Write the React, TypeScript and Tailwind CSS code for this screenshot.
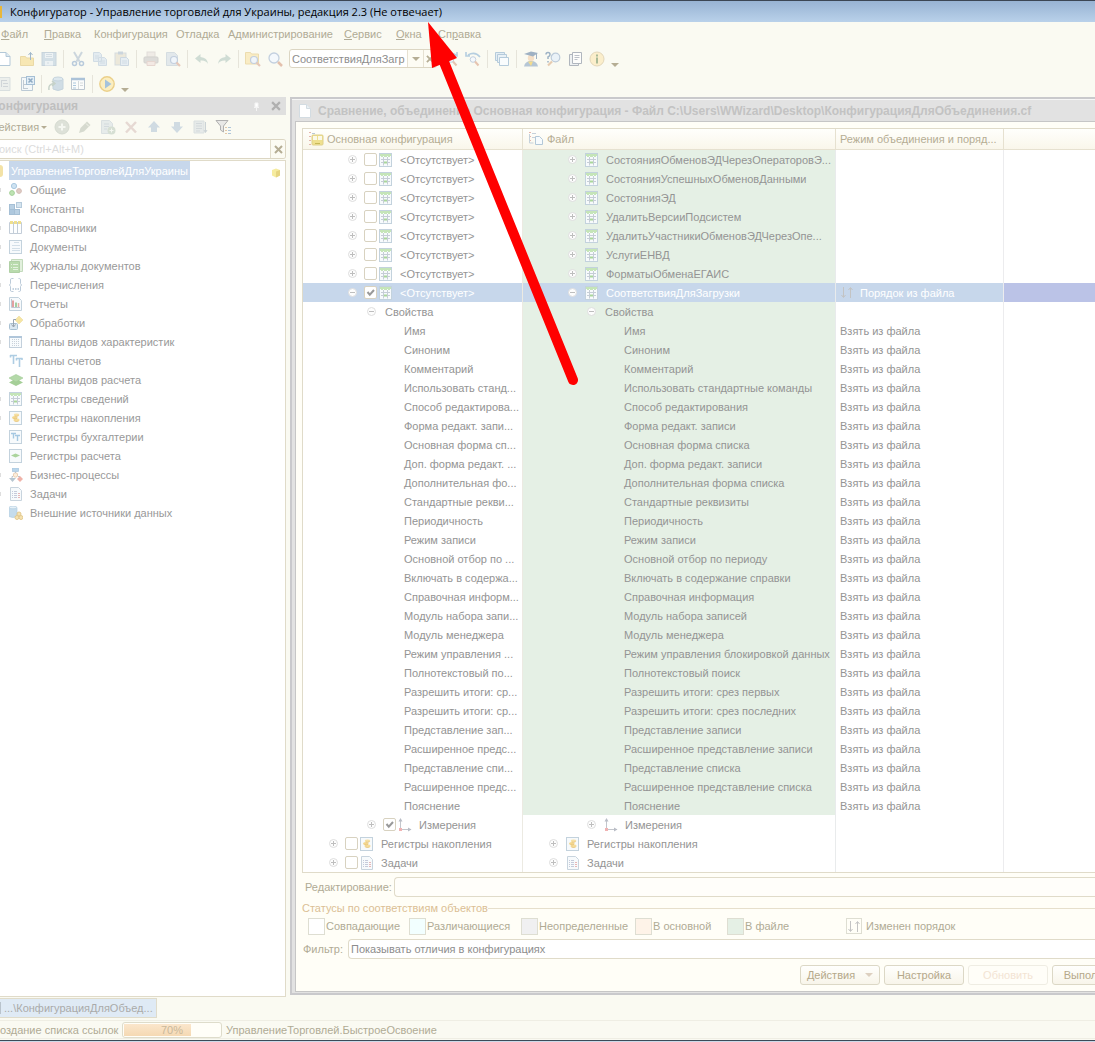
import React from 'react';

interface TreeRow {
  level: number;
  left: string;
  right: string;
  mode?: string;
  toggle?: 'plus' | 'minus';
  icon?: IconName;
  check?: 'on' | 'off';
  green?: boolean;
  selected?: boolean;
}

const P = ({ children, size = 16 }: { children: React.ReactNode; size?: number }) => (
  <svg width={size} height={size} viewBox={`0 0 ${size} ${size}`} fill="none" className="shrink-0" aria-hidden="true">
    {children}
  </svg>
);

const frame = <rect x=".5" y=".5" width="12" height="13" fill="#f7fafc" stroke="#c3d2dd" />;

const ICONS = {
  common: (
    <>
      <circle cx="5" cy="3" r="2.600" fill="#cfe3f2" stroke="#a9c8e0" />
      <circle cx="3" cy="10" r="2.400" fill="#bfe3b4" stroke="#a5d199" />
      <circle cx="10" cy="8" r="2.400" fill="#e0ccc6" stroke="#d3bcb5" />
    </>
  ),
  constants: (
    <>
      <rect x="7.500" y=".5" width="5" height="5" fill="#d5e4ef" stroke="#b5cadb" />
      <rect x=".5" y="2.500" width="5" height="5" fill="#b9d0e3" stroke="#a5bfd5" />
      <rect x=".5" y="7.500" width="5" height="5" fill="#aec8de" stroke="#a5bfd5" />
      <rect x="5.500" y="7.500" width="5" height="5" fill="#b9d0e3" stroke="#a5bfd5" />
    </>
  ),
  catalog: (
    <>
      <path d="M.5 1.500h12v11H.5zM4.500 2v10.500M8.500 2v10.500" fill="#fdfeff" stroke="#c3cdd8" />
      <path d="M1 1.500h3M5 1.500h3M9 1.500h3" stroke="#efdf8f" strokeWidth="3" />
    </>
  ),
  document: (
    <>
      {frame}
      <path d="M5 2.500h5M3 5.500h8M3 8.500h8M3 10.500h8" stroke="#d3dfe8" />
    </>
  ),
  journal: (
    <>
      <path d="M2.500.5h11v12h-11z" fill="#e2f0dd" stroke="#c3dabc" />
      <path d="M.5 2.500h10v11H.5z" fill="#b9dbad" stroke="#b0d0a5" />
      <path d="M4 5.500h5M4 8.500h5M4 10.500h5M2 5.500h1M2 8.500h1" stroke="#e4f2df" />
    </>
  ),
  enumeration: (
    <>
      <path d="M4.500.5h-2q-1 0-1 1.500v3.500L.5 7l1 1.500V12q0 1.500 1 1.500h2M9.500.5h1q1 0 1 1.500v3.500l1 1.500-1 1.500V12q0 1.500-1 1.500h-1" stroke="#bccbd9" />
      <path d="M3.500 11h1.500M6 11h1.500M8.500 11H10" stroke="#b4c6d6" strokeWidth="1.500" />
    </>
  ),
  report: (
    <>
      <path d="M.5.5h9l3 3v10H.5z" fill="#f7fafc" stroke="#c3d2dd" />
      <path d="M4 10V3.500" stroke="#e3a0a0" strokeWidth="2" />
      <path d="M7 10V5.500" stroke="#a3cfa3" strokeWidth="2" />
      <path d="M9.500 10V6" stroke="#e8b0a5" strokeWidth="1.500" />
      <path d="M2.500 2v8.500H11" stroke="#c0c9d3" />
    </>
  ),
  processing: (
    <>
      <path d="M10 0l4 4-4 4-4-4z" fill="#f6e5a3" stroke="#ecdca0" strokeWidth=".6" />
      <rect x=".5" y="7.500" width="8" height="6" rx="1" fill="#dbe8f1" stroke="#a8c0d2" />
      <path d="M7 3.500H4.500V11M2.500 8.500l2 2.500 2-2.500" stroke="#9aa5b0" />
    </>
  ),
  charPlan: (
    <>
      <rect x=".5" y="1.500" width="12" height="11" fill="#f8fbfd" stroke="#c3d0dc" />
      <path d="M0 2h13" stroke="#b0c6da" strokeWidth="2" />
      <path d="M3.500 4v8M5.500 4v8M7.500 4v8M9.500 4v8" stroke="#c9d1da" strokeDasharray="1 1" />
    </>
  ),
  accounts: (
    <path d="M1 1.500h7M4.500 2v8M7 4.500h6.500M10.500 5v8M1.500 1v2.500M7.500 4v2.500M13 4v2" stroke="#aecde3" strokeWidth="1.600" />
  ),
  calcPlan: (
    <>
      <path d="M0 9.500l7-4 7 4-7 3.500z" fill="#a5cf98" />
      <path d="M0 5L7 1.500 14 5 7 9z" fill="#b4d9a9" stroke="#a0cb93" strokeWidth=".6" />
    </>
  ),
  infoReg: (
    <>
      {frame}
      <path d="M1 1h11v2h-1v1H9V3H8v1H5V3H4v1H2V3H1z" fill="#c5e5b8" />
      <path d="M2 6.500h9M2 9.500h9M4.500 4v8.500M8.500 4v8.500" stroke="#c6ced6" />
      <path d="M5 9.500h3" stroke="#a9d69b" strokeWidth="2" />
    </>
  ),
  accumReg: (
    <>
      {frame}
      <ellipse cx="7.500" cy="4" rx="2.800" ry="1.400" fill="#f6e0a3" />
      <ellipse cx="5.800" cy="6.500" rx="2.800" ry="1.600" fill="#f3d68c" />
      <ellipse cx="7.500" cy="9" rx="3" ry="1.700" fill="#f6dd9a" />
      <path d="M4.500 7.500q1.500.8 3.500 0M5.500 10q2 1 4 0M6 5q1.500.6 3.500-.3" stroke="#e3bd75" strokeWidth=".7" />
    </>
  ),
  acctReg: (
    <>
      {frame}
      <path d="M2 3.500h5M4.500 4v4.500M6 5.500h5M8.500 6v5" stroke="#a5c8e2" strokeWidth="1.400" />
    </>
  ),
  calcReg: (
    <>
      {frame}
      <path d="M2 6.500l4.500-2 4.500 2-4.500 2z" fill="#abd49d" />
    </>
  ),
  process: (
    <>
      <rect x="3.500" y="0" width="6" height="3.500" fill="#b9d6ec" stroke="#a5c4dd" strokeWidth=".7" />
      <circle cx="6.500" cy="7" r="2.200" fill="#fbeedd" stroke="#eccfb2" />
      <path d="M6.500 3.500V5M3 10.500V8.500h1M9 8.500h2" stroke="#b9c4ce" />
      <path d="M0 10h7L3.500 14z" fill="#b7c6d0" />
      <path d="M11 8l3 3-3 3-3-3z" fill="#efb3a9" />
    </>
  ),
  task: (
    <>
      <path d="M1.500.5h8l3 3v10h-11z" fill="#f7fafc" stroke="#c8d4de" />
      <path d="M3 4.500h2M3 6.500h2M3 8.500h2M3 10.500h2" stroke="#c5cbdb" strokeDasharray="1 1" />
      <path d="M5 4.500h3M5 6.500h3M5 8.500h3M5 10.500h3" stroke="#c5cbdb" />
      <path d="M9 6.500h2M9 8.500h2M9 10.500h2" stroke="#e8b5b5" />
    </>
  ),
  external: (
    <>
      <path d="M0 1.500v9q4 2 8 0v-9z" fill="#c5dcec" stroke="#b5cee1" strokeWidth=".7" />
      <ellipse cx="4" cy="1.500" rx="4" ry="1.300" fill="#e6f1f8" stroke="#b5cee1" strokeWidth=".7" />
      <circle cx="10" cy="8" r="2" fill="#f5e2b0" stroke="#e3c98f" />
      <circle cx="8" cy="11.500" r="2" fill="#f5e2b0" stroke="#e3c98f" />
      <circle cx="12" cy="11.500" r="2" fill="#f5e2b0" stroke="#e3c98f" />
    </>
  ),
  axes: (
    <>
      <path d="M2.500 12V1M2 11.500h11" stroke="#c3c6cc" />
      <path d="M.5 3.500L2.500 0l2 3.500zM10 9.500l3.500 2-3.500 2z" fill="#b9bdc6" />
      <rect x="1" y="10" width="3" height="3" fill="#f0b3b3" />
    </>
  ),
};

type IconName = keyof typeof ICONS;

const Icon = ({ name }: { name: IconName }) => <P size={14}>{ICONS[name]}</P>;

const metadata: { name: string; icon: IconName; more: boolean }[] = [
  { name: 'Общие', icon: 'common', more: true },
  { name: 'Константы', icon: 'constants', more: true },
  { name: 'Справочники', icon: 'catalog', more: true },
  { name: 'Документы', icon: 'document', more: true },
  { name: 'Журналы документов', icon: 'journal', more: true },
  { name: 'Перечисления', icon: 'enumeration', more: true },
  { name: 'Отчеты', icon: 'report', more: true },
  { name: 'Обработки', icon: 'processing', more: true },
  { name: 'Планы видов характеристик', icon: 'charPlan', more: true },
  { name: 'Планы счетов', icon: 'accounts', more: false },
  { name: 'Планы видов расчета', icon: 'calcPlan', more: false },
  { name: 'Регистры сведений', icon: 'infoReg', more: true },
  { name: 'Регистры накопления', icon: 'accumReg', more: true },
  { name: 'Регистры бухгалтерии', icon: 'acctReg', more: false },
  { name: 'Регистры расчета', icon: 'calcReg', more: false },
  { name: 'Бизнес-процессы', icon: 'process', more: true },
  { name: 'Задачи', icon: 'task', more: true },
  { name: 'Внешние источники данных', icon: 'external', more: false },
];

const registers = [
  'СостоянияОбменовЭДЧерезОператоровЭ...',
  'СостоянияУспешныхОбменовДанными',
  'СостоянияЭД',
  'УдалитьВерсииПодсистем',
  'УдалитьУчастникиОбменовЭДЧерезОпе...',
  'УслугиЕНВД',
  'ФорматыОбменаЕГАИС',
];

const properties: [string, string][] = [
  ['Имя', 'Имя'],
  ['Синоним', 'Синоним'],
  ['Комментарий', 'Комментарий'],
  ['Использовать станд...', 'Использовать стандартные команды'],
  ['Способ редактирова...', 'Способ редактирования'],
  ['Форма редакт. запи...', 'Форма редакт. записи'],
  ['Основная форма сп...', 'Основная форма списка'],
  ['Доп. форма редакт. ...', 'Доп. форма редакт. записи'],
  ['Дополнительная фо...', 'Дополнительная форма списка'],
  ['Стандартные рекви...', 'Стандартные реквизиты'],
  ['Периодичность', 'Периодичность'],
  ['Режим записи', 'Режим записи'],
  ['Основной отбор по ...', 'Основной отбор по периоду'],
  ['Включать в содержа...', 'Включать в содержание справки'],
  ['Справочная информ...', 'Справочная информация'],
  ['Модуль набора запи...', 'Модуль набора записей'],
  ['Модуль менеджера', 'Модуль менеджера'],
  ['Режим управления ...', 'Режим управления блокировкой данных'],
  ['Полнотекстовый по...', 'Полнотекстовый поиск'],
  ['Разрешить итоги: ср...', 'Разрешить итоги: срез первых'],
  ['Разрешить итоги: ср...', 'Разрешить итоги: срез последних'],
  ['Представление зап...', 'Представление записи'],
  ['Расширенное предс...', 'Расширенное представление записи'],
  ['Представление спи...', 'Представление списка'],
  ['Расширенное предс...', 'Расширенное представление списка'],
  ['Пояснение', 'Пояснение'],
];

const rows: TreeRow[] = [
  ...registers.map((right): TreeRow => ({
    level: 1, left: '<Отсутствует>', right, toggle: 'plus', icon: 'infoReg', check: 'off', green: true,
  })),
  {
    level: 1, left: '<Отсутствует>', right: 'СоответствияДляЗагрузки', mode: 'Порядок из файла',
    toggle: 'minus', icon: 'infoReg', check: 'on', selected: true,
  },
  { level: 2, left: 'Свойства', right: 'Свойства', toggle: 'minus', green: true },
  ...properties.map(([left, right]): TreeRow => ({ level: 3, left, right, mode: 'Взять из файла', green: true })),
  { level: 2, left: 'Измерения', right: 'Измерения', toggle: 'plus', icon: 'axes', check: 'on' },
  { level: 0, left: 'Регистры накопления', right: 'Регистры накопления', toggle: 'plus', icon: 'accumReg', check: 'off' },
  { level: 0, left: 'Задачи', right: 'Задачи', toggle: 'plus', icon: 'task', check: 'off' },
];

const INDENT = ['pl-[24px]', 'pl-[43px]', 'pl-[62px]', 'pl-[81px]'];

const Toggle = ({ kind }: { kind?: 'plus' | 'minus' }) => (
  <svg width="13" height="13" viewBox="0 0 13 13" className="shrink-0" aria-hidden="true">
    {kind && (
      <>
        <circle cx="6.500" cy="6.500" r="4" fill="#fdfdfd" stroke="#dedede" />
        <path d={kind === 'plus' ? 'M4 6.500h5M6.500 4v5' : 'M4 6.500h5'} stroke="#bebebe" />
      </>
    )}
  </svg>
);

const Check = ({ on, label }: { on: boolean; label: string }) => (
  <span className="relative ml-[5px] mr-px flex h-[13px] w-[13px] shrink-0">
    <input
      type="checkbox"
      defaultChecked={on}
      aria-label={label}
      className="h-[13px] w-[13px] appearance-none rounded-[2px] border border-[#d8d2c0] bg-white"
    />
    {on && (
      <svg width="13" height="13" viewBox="0 0 13 13" className="pointer-events-none absolute inset-0" aria-hidden="true">
        <path d="M3.500 6l2.300 2.700L10 4" fill="none" stroke="#999" strokeWidth="2" />
      </svg>
    )}
  </span>
);

const TreeCell = ({ row, side }: { row: TreeRow; side: 'left' | 'right' }) => (
  <div className={`flex h-[19px] items-center whitespace-nowrap ${INDENT[row.level]}`}>
    <Toggle kind={row.toggle} />
    {row.check && side === 'left' && <Check on={row.check === 'on'} label={row.left} />}
    {row.icon && (
      <span className={side === 'left' ? 'ml-px' : 'ml-[6px]'}>
        <Icon name={row.icon} />
      </span>
    )}
    <span className="ml-[7px]">{side === 'left' ? row.left : row.right}</span>
  </div>
);

const OrderArrows = () => (
  <svg width="14" height="13" viewBox="0 0 14 13" className="shrink-0" aria-hidden="true">
    <path d="M3.500 1v10M1.500 9l2 2.500 2-2.500M10.500 12V2M8.500 4l2-2.500 2 2.500" fill="none" stroke="#c3c3c3" />
  </svg>
);

const Sep = () => <span className="h-[18px] w-px shrink-0 bg-[#e6e4da]" />;

const Tool = ({ label, children }: { label: string; children: React.ReactNode }) => (
  <button type="button" aria-label={label} className="flex h-[16px] w-[16px] shrink-0 items-center justify-center">
    <P>{children}</P>
  </button>
);

const Caret = () => (
  <svg width="8" height="4" viewBox="0 0 8 4" aria-hidden="true">
    <path d="M0 0h8L4 4z" fill="#b5ad94" />
  </svg>
);

const Cross = ({ color = '#b5ad94', size = 9 }: { color?: string; size?: number }) => (
  <svg width={size} height={size} viewBox="0 0 9 9" aria-hidden="true">
    <path d="M1 1l7 7M8 1L1 8" stroke={color} strokeWidth="2" />
  </svg>
);

const lens = (
  <>
    <circle cx="9" cy="9" r="3.500" fill="#f0f5fa" stroke="#c3cfde" strokeWidth="1.200" />
    <path d="M11.500 11.500L15 15" stroke="#e6c8b9" strokeWidth="2.200" />
  </>
);

const MainToolbar = () => (
  <div className="-ml-[3px] flex h-[25px] items-center gap-[6px]">
    <Tool label="Новый">
      <path d="M1 1.500h8l4 4v9H1z" fill="#fff" stroke="#b3c8d8" />
      <path d="M9 1.500v4h4" fill="#dce8f0" stroke="#b3c8d8" />
    </Tool>
    <Tool label="Открыть">
      <path d="M1.500 5.500h5l1 1.500h7v7.500h-13z" fill="#f7e7b3" stroke="#ead9a6" />
      <path d="M11.500 9V1.500M9.500 4l2-2.500 2 2.500" stroke="#9fb7cb" />
    </Tool>
    <Tool label="Сохранить">
      <rect x="1" y="1.500" width="14" height="13" fill="#d3dfe6" stroke="#c8d4dc" />
      <path d="M4 2h8v5H4zM4 10h8v4.500H4z" fill="#edf2f4" />
      <path d="M5 3.500h6M5 5.500h6M6 12h2" stroke="#d3dde3" />
    </Tool>
    <Sep />
    <Tool label="Вырезать">
      <path d="M4 1l5.500 9.500M12 1L6.500 10.500" stroke="#ccd6dd" strokeWidth="2" />
      <circle cx="4.500" cy="12.500" r="2" stroke="#b9cbdc" strokeWidth="1.500" />
      <circle cx="11.500" cy="12.500" r="2" stroke="#b9cbdc" strokeWidth="1.500" />
    </Tool>
    <Tool label="Копировать">
      <path d="M1.500 1.500h6l2 2v7h-8zM6.500 6.500h6l2 2v6h-8z" fill="#e3ebf0" stroke="#d1dce4" />
      <path d="M3 5h4M3 7h3M8 10h5M8 12h5" stroke="#d1dce4" />
    </Tool>
    <Tool label="Вставить">
      <rect x="1" y="2" width="11" height="12" fill="#ece8da" stroke="#d5dcdf" />
      <rect x="4" y="0.500" width="5" height="3" fill="#cbd5dd" />
      <path d="M6.500 6.500h6l2 2v6h-8z" fill="#e6edf2" stroke="#cdd8e1" />
      <path d="M8 10h5M8 12h5" stroke="#d1dce4" />
    </Tool>
    <Sep />
    <Tool label="Печать">
      <rect x="4" y="1" width="8" height="5" fill="#efebe6" stroke="#e2ded9" />
      <rect x="1" y="6" width="14" height="6" rx="1" fill="#dddcd9" stroke="#d3d2cf" />
      <path d="M4 10.500h8v4H4z" fill="#f3e9e4" stroke="#e6d6d0" />
    </Tool>
    <Tool label="Просмотр">
      <path d="M1.500 1.500h8l3 3v10h-11z" fill="#e2e8eb" stroke="#d5dde1" />
      {lens}
    </Tool>
    <Sep />
    <Tool label="Отменить">
      <path d="M1 7.500L6.500 3v3q7 .5 7.500 7-2-4-7.500-3.500V12z" fill="#cfdcd4" />
    </Tool>
    <Tool label="Повторить">
      <path d="M15 7.500L9.500 3v3Q2.500 6.500 2 13q2-4 7.500-3.500V12z" fill="#cfdcd4" />
    </Tool>
    <Sep />
    <Tool label="Найти в файлах">
      <path d="M.5 1.500h5l1 1.500h7v10H.5z" fill="#f9ecc4" stroke="#ecdcae" />
      {lens}
    </Tool>
    <Tool label="Найти">
      <circle cx="7" cy="7" r="5" fill="#f4f8fc" stroke="#c3d0df" strokeWidth="1.300" />
      <path d="M11 11l4 4" stroke="#e3c0ad" strokeWidth="2.500" />
    </Tool>
    <div className="flex h-[19px] w-[148px] shrink-0 items-stretch overflow-hidden rounded-[3px] border border-[#dcd6c3] bg-white">
      <input aria-label="Строка поиска" defaultValue="СоответствияДляЗагр" className="w-[117px] min-w-0 pl-[2px] text-[#8d8d8d] outline-none" />
      <button type="button" aria-label="История" className="flex w-[16px] items-center justify-center border-l border-[#e6e1d2] bg-[#fdfcf4]">
        <Caret />
      </button>
      <button type="button" aria-label="Очистить" className="flex flex-1 items-center justify-center border-l border-[#e6e1d2] bg-[#fdfcf4]">
        <Cross size={8} />
      </button>
    </div>
    <Tool label="Найти далее">
      <path d="M2 6q5-6 11-2M14 1v4h-4" stroke="#b5cee0" strokeWidth="1.600" />
      <circle cx="8" cy="8.500" r="2.800" fill="#f4f8fc" stroke="#c3d0df" />
      <path d="M10 10.500l3.500 4" stroke="#e6c4b0" strokeWidth="2" />
    </Tool>
    <Tool label="Найти назад">
      <path d="M15 6q-5-6-12-2M1 1v4h4" stroke="#b5cee0" strokeWidth="1.600" />
      <circle cx="8" cy="8.500" r="2.800" fill="#f4f8fc" stroke="#c3d0df" />
      <path d="M10 10.500l3.500 4" stroke="#e6c4b0" strokeWidth="2" />
    </Tool>
    <Sep />
    <Tool label="Окна">
      <path d="M1.500 1.500h9v8h-9z" fill="#e3edf4" stroke="#b5cbdb" />
      <path d="M3.500 3.500h9v8h-9z" fill="#e9f1f6" stroke="#b5cbdb" />
      <path d="M5.500 6.500h9v8h-9z" fill="#f9fcfd" stroke="#b5cbdb" />
    </Tool>
    <Sep />
    <Tool label="Синтакс-помощник">
      <circle cx="8" cy="7" r="3.200" fill="#f6dfc6" />
      <path d="M1 3l7-2.500L15 2l-5 3.500z" fill="#9fb1c3" />
      <path d="M1 15.500q1-5.500 7-5.500t7 5.500z" fill="#b5c6d5" />
      <path d="M5 10.500l3 4.500 2-4.500z" fill="#f4dc8c" />
      <path d="M13.500 2v6" stroke="#9fb1c3" />
    </Tool>
    <Tool label="Поиск в справке">
      <path d="M1 3.500Q1 1.500 3 1.500t2 2q0 1.500-2 2.500v2M3 10v1.500" stroke="#9db2c5" strokeWidth="1.500" />
      <circle cx="10.500" cy="6.500" r="4.300" fill="#eaf2f8" stroke="#bccbda" strokeWidth="1.200" />
      <path d="M7 10.500L3 14.500" stroke="#e6cbb0" strokeWidth="2.200" />
    </Tool>
    <Tool label="Содержание справки">
      <path d="M2.500 3.500h9v11h-9z" fill="#eef1f2" stroke="#b0b6be" />
      <path d="M5.500 1.500h9v11h-9z" fill="#fdfdfb" stroke="#b0b6be" />
      <path d="M7.500 4.500h5M7.500 6.500h5M7.500 8.500h3" stroke="#bcc1c8" />
    </Tool>
    <Tool label="О программе">
      <circle cx="8" cy="8" r="7" fill="#fbeecb" stroke="#e3d7ba" />
      <path d="M8 6.500v6M8 3.500v2" stroke="#a9ba97" strokeWidth="2" />
    </Tool>
    <button type="button" aria-label="Еще" className="mt-[12px]"><Caret /></button>
  </div>
);

const ConfigToolbar = () => (
  <div className="-ml-[3px] flex h-[26px] items-center gap-[6px]">
    <Tool label="Открыть конфигурацию">
      <path d="M1 1.500h12v13H1z" fill="#ecefec" stroke="#d9dfdf" />
      <path d="M4 4.500h6M6 7.500h5M6 10.500h5M4.500 5v6" stroke="#d0d5d8" />
    </Tool>
    <Tool label="Закрыть конфигурацию">
      <path d="M2.500 1.500h11v13h-11z" fill="#f4f8f9" stroke="#bccad5" />
      <path d="M4.500 4v9M5 8.500h4M5 12.500h4" stroke="#c0cad2" />
      <rect x="7.500" y=".5" width="8" height="8" fill="#e3eef6" stroke="#a5bfd4" />
      <path d="M9.500 2.500l4 4M13.500 2.500l-4 4" stroke="#8fabc3" strokeWidth="1.500" />
    </Tool>
    <Sep />
    <Tool label="Обновить базу данных">
      <path d="M5 3v10q5 3 10 0V3z" fill="#d0dde5" stroke="#c6d4dd" />
      <ellipse cx="10" cy="3" rx="5" ry="2" fill="#dde8ee" stroke="#c6d4dd" />
      <path d="M1 14q-1-6 5-6.500M4 5l3 2.500-3 2.500" stroke="#c6d2c9" strokeWidth="1.500" />
    </Tool>
    <Tool label="Окно конфигурации">
      <path d="M1.500 2.500h13v11h-13z" fill="#fbfcfb" stroke="#bcc6cf" />
      <path d="M1 3h14" stroke="#abc2d8" strokeWidth="2.500" />
      <path d="M3 7h3M3 9.500h3M3 12h3" stroke="#abc8de" />
      <path d="M8.500 5v8M10 7h3M10 9.500h3" stroke="#d5dadc" />
    </Tool>
    <Sep />
    <Tool label="Начать отладку">
      <circle cx="8" cy="8" r="7.200" fill="#fbeec0" stroke="#ebd08a" strokeWidth="1.400" />
      <path d="M6 3.500l6.500 4.500L6 12.500z" fill="#a5c3dc" />
    </Tool>
    <button type="button" aria-label="Еще" className="mt-[12px]"><Caret /></button>
  </div>
);

const menu: [string, string, string][] = [
  ['', 'Ф', 'айл'],
  ['', 'П', 'равка'],
  ['Конфигурация', '', ''],
  ['Отладка', '', ''],
  ['Администрирование', '', ''],
  ['', 'С', 'ервис'],
  ['', 'О', 'кна'],
  ['Сп', 'р', 'авка'],
];

const MENU_WIDTHS = ['w-[43px]', 'w-[50px]', 'w-[82px]', 'w-[52px]', 'w-[116px]', 'w-[52px]', 'w-[42px]', 'w-[50px]'];

const ConfigPanel = () => (
  <aside className="flex w-[286px] shrink-0 flex-col">
    <div className="flex h-[18px] items-center overflow-hidden bg-[#dfdfdf]">
      <h2 className="-ml-[9px] flex-1 text-[12px] font-bold text-[#bfbfbf]">Конфигурация</h2>
      <svg width="5" height="9" viewBox="0 0 5 9" className="mr-[12px]" aria-hidden="true">
        <path d="M1 1h3v4H1zM0 5.500h5M2.500 6v3" fill="#fff" stroke="#f4f4f4" />
      </svg>
      <button type="button" aria-label="Закрыть панель" className="mr-[5px]">
        <Cross color="#b0b0b0" size={10} />
      </button>
    </div>
    <div className="-ml-[9px] flex h-[24px] items-center gap-[7px]">
      <button type="button" className="flex w-[56px] shrink-0 items-center justify-between">
        Действия
        <svg width="6" height="3" viewBox="0 0 6 3" aria-hidden="true"><path d="M0 0h6L3 3z" fill="#b5ad94" /></svg>
      </button>
      <Tool label="Добавить">
        <circle cx="8" cy="8" r="7" fill="#dde1d8" stroke="#d5dad0" />
        <path d="M8 4.500v7M4.500 8h7" stroke="#f5f7f1" strokeWidth="2" />
      </Tool>
      <Tool label="Изменить">
        <path d="M2 14l1.500-5L10 2.500 13.500 6 7 12.500z" fill="#d6dacf" />
        <path d="M9 4.500L12 7.500" stroke="#f2f3ea" />
      </Tool>
      <Tool label="Скопировать">
        <path d="M1.500 1.500h8l3 3v10h-11z" fill="#e6ebea" stroke="#dae0e1" />
        <path d="M4 5h5M4 7.500h5M4 10h3" stroke="#d3dadd" />
        <circle cx="11.500" cy="11.500" r="4" fill="#d6dfd3" />
        <path d="M11.500 9.500v4M9.500 11.500h4" stroke="#f5f7f1" />
      </Tool>
      <Tool label="Удалить">
        <path d="M3 3l10 10.500M13 3L3 13.500" stroke="#e6d9d3" strokeWidth="2.500" />
      </Tool>
      <Tool label="Вверх">
        <path d="M8 2l6 6.500h-3V13H5V8.500H2z" fill="#d0dbe2" />
      </Tool>
      <Tool label="Вниз">
        <path d="M8 14l6-6.500h-3V3H5v4.500H2z" fill="#d0dbe2" />
      </Tool>
      <Tool label="Упорядочить">
        <path d="M2 2h10v12H2z" fill="#e6eae9" stroke="#dae0e0" />
        <path d="M4 4.500h6M4 7h6M4 9.500h6M4 12h4" stroke="#d3d9db" />
        <path d="M13.500 3v10M12 11l1.500 2.500L15 11" stroke="#cbd3d6" />
      </Tool>
      <Tool label="Отбор">
        <path d="M1 1.500h12L8.500 7v6l-3-2V7z" fill="#e8e8e6" stroke="#b0b0b0" />
        <path d="M10 8.500h2M10 11.500h2M10 14.500h2" stroke="#e3c9a9" />
        <path d="M13 8.500h3M13 11.500h3M13 14.500h3" stroke="#aec5da" />
      </Tool>
    </div>
    <div className="flex h-[20px] items-stretch overflow-hidden rounded-r-[3px] border border-l-0 border-[#dcd6c3] bg-white">
      <input aria-label="Поиск" placeholder="Поиск (Ctrl+Alt+M)" className="-ml-[9px] min-w-0 flex-1 outline-none placeholder:text-[#dcdcdc]" />
      <button type="button" aria-label="Очистить поиск" className="flex w-[15px] items-center justify-center border-l border-[#e3decd] bg-[#fcfbf3]">
        <Cross />
      </button>
    </div>
    <div className="mt-px flex-1 border-y border-r border-[#e0dbc9] bg-white text-[#999]">
      <ul>
        <li className="flex h-[19px] items-center">
          <span className="mr-[6px] h-[12px] w-[3px] rounded-r-full bg-[#f3e2a6]" />
          <span className="flex h-[19px] items-center bg-[#c7d7eb] px-[2px] text-white">УправлениеТорговлейДляУкраины</span>
          <svg width="10" height="10" viewBox="0 0 10 10" className="ml-auto mr-[4px] mt-[5px]" aria-hidden="true">
            <path d="M1 2l4-1.500L9 2v5.500L5 9.500 1 7.500z" fill="#f6ec9f" />
            <path d="M5 3.500L9 2v5.500L5 9.500z" fill="#e6d582" />
          </svg>
        </li>
        {metadata.map((item) => (
          <li key={item.name} className="flex h-[19px] items-center">
            <span className={`mr-[8px] h-[4px] w-px ${item.more ? 'bg-[#dedede]' : ''}`} />
            <Icon name={item.icon} />
            <span className="ml-[7px]">{item.name}</span>
          </li>
        ))}
      </ul>
    </div>
  </aside>
);

const CompareTable = () => (
  <div className="ml-[6px] mt-[6px] border-y border-l border-[#e0dbc9] bg-white">
    <table className="w-full table-fixed border-separate border-spacing-0 text-[#949494]">
      <colgroup>
        <col className="w-[220px]" />
        <col className="w-[313px]" />
        <col className="w-[168px]" />
        <col />
      </colgroup>
      <thead>
        <tr className="bg-linear-to-b from-[#fffffc] to-[#f9f6ea] text-left text-[#b5ad94]">
          <th className="h-[21px] border-b border-r border-[#e6e1d0] p-0 font-normal">
            <div className="flex items-center gap-[3px] pl-[5px]">
              <P>
                <path d="M1 1.500h2M1 5.500h2M1 9.500h2M1 13.500h2" stroke="#e5b5ad" />
                <path d="M4 2.500h3M4 6.500h2" stroke="#bac8d4" />
                <rect x="4" y="4" width="11" height="10" rx="1" fill="#efe08f" stroke="#dfd08a" />
                <path d="M5 5h4v4H5zM10 5h4v4h-4z" fill="#fbf9e8" />
                <path d="M7 12.500h5" stroke="#c8b858" />
              </P>
              Основная конфигурация
            </div>
          </th>
          <th className="border-b border-r border-[#e6e1d0] p-0 font-normal">
            <div className="flex items-center gap-[3px] pl-[5px]">
              <P>
                <path d="M1 1.500h2M1 5.500h2M1 9.500h2" stroke="#e5b5ad" />
                <path d="M4 2.500h4M1.500 3v9h4M4 6.500h3" stroke="#c5d1db" />
                <path d="M7.500 5.500h4l3 3v5h-7z" fill="#f7fbfd" stroke="#b3c8d8" />
              </P>
              Файл
            </div>
          </th>
          <th className="whitespace-nowrap border-b border-r border-[#e6e1d0] p-0 pl-[4px] font-normal">
            Режим объединения и поряд...
          </th>
          <th aria-label="Примечание" className="border-b border-[#e6e1d0] p-0" />
        </tr>
      </thead>
      <tbody>
        {rows.map((row, i) => {
          const base = row.selected ? 'bg-[#c7d7eb] text-white' : '';
          return (
            <tr key={i} className="h-[19px]">
              <td className={`border-r border-[#eceae2] p-0 ${base}`}>
                <TreeCell row={row} side="left" />
              </td>
              <td className={`border-r border-[#e9ebec] p-0 ${base} ${row.green ? 'bg-[#e5f0e5]' : ''}`}>
                <TreeCell row={row} side="right" />
              </td>
              <td className={`border-r border-[#ececee] p-0 ${base}`}>
                <div className="flex h-[19px] items-center gap-[6px] whitespace-nowrap pl-[4px]">
                  {row.selected && <OrderArrows />}
                  {row.mode}
                </div>
              </td>
              <td className={`p-0 ${row.selected ? 'bg-[#bbc3e7]' : ''}`} />
            </tr>
          );
        })}
      </tbody>
    </table>
  </div>
);

const Legend = ({ color, width, children }: { color: string; width: string; children: string }) => (
  <span className={`flex shrink-0 items-center gap-px ${width}`}>
    <span className={`h-[17px] w-[17px] border border-[#deded2] ${color}`} />
    {children}
  </span>
);

const buttonClass =
  'flex h-[20px] w-[80px] shrink-0 items-center justify-center rounded-[3px] border border-[#dcd8c6] bg-linear-to-b from-[#fffffd] to-[#f8f5ea] text-[#b5a88a]';

const CompareWindow = () => (
  <section className="mb-[2px] ml-[4px] flex min-w-0 flex-1 flex-col border-y-2 border-l-2 border-[#c9c9cc] bg-[#e2e2e2]">
    <div className="flex h-[22px] items-center gap-[7px] overflow-hidden whitespace-nowrap border-t border-[#f6f6f6] pl-[7px]">
      <svg width="12" height="14" viewBox="0 0 12 14" className="shrink-0" aria-hidden="true">
        <path d="M.5.5h7l4 4v9H.5z" fill="#fff" stroke="#d3dce2" />
        <path d="M7.500.5v4h4" fill="#e9f0f4" stroke="#d3dce2" />
      </svg>
      <h1 className="text-[12px] font-bold text-[#c3c3c3]">
        Сравнение, объединение Основная конфигурация - Файл C:\Users\WWizard\Desktop\КонфигурацияДляОбъединения.cf
      </h1>
    </div>
    <div className="mb-px ml-[3px] flex flex-1 flex-col border-y border-l border-[#c6c6c6] bg-[#fffef7]">
      <CompareTable />
      <div className="mt-[4px] flex h-[20px] items-center pl-[9px]">
        <label htmlFor="editing" className="w-[89px] shrink-0 whitespace-nowrap">Редактирование:</label>
        <input id="editing" className="h-full min-w-0 flex-1 rounded-l-[4px] border border-r-0 border-[#e0dbc9] bg-[#fffefa] outline-none" />
      </div>
      <div className="mt-[4px] flex h-[14px] items-center pl-[6px] text-[#dbbf95]">
        <h3 className="whitespace-nowrap">Статусы по соответствиям объектов</h3>
        <span className="h-px flex-1 bg-[#e6dfcc]" />
      </div>
      <div className="mt-[2px] flex h-[18px] items-center whitespace-nowrap pl-[12px]">
        <Legend color="bg-white" width="w-[101px]">Совпадающие</Legend>
        <Legend color="bg-[#f2ffff]" width="w-[112px]">Различающиеся</Legend>
        <Legend color="bg-[#f0f0f1]" width="w-[114px]">Неопределенные</Legend>
        <Legend color="bg-[#fef3e8]" width="w-[92px]">В основной</Legend>
        <Legend color="bg-[#e5f0e5]" width="w-[119px]">В файле</Legend>
        <span className="flex items-center gap-[4px]">
          <span className="flex h-[16px] w-[16px] items-center justify-center border border-[#deded2]"><OrderArrows /></span>
          Изменен порядок
        </span>
      </div>
      <div className="mt-[4px] flex h-[20px] items-center pl-[7px]">
        <label htmlFor="filter" className="w-[45px] shrink-0">Фильтр:</label>
        <select id="filter" className="h-full min-w-0 flex-1 appearance-none rounded-l-[4px] border border-r-0 border-[#e0dbc9] bg-white pl-[2px] text-[#8d8d8d] outline-none">
          <option>Показывать отличия в конфигурациях</option>
        </select>
      </div>
      <div className="mb-[5px] mt-[6px] flex h-[20px] justify-end gap-[4px] overflow-hidden">
        <button type="button" className={buttonClass}>
          <span className="mr-[10px]">Действия</span>
          <svg width="8" height="4" viewBox="0 0 8 4" aria-hidden="true"><path d="M0 0h8L4 4z" fill="#ddd0c0" /></svg>
        </button>
        <button type="button" className={buttonClass}>Настройка</button>
        <button type="button" disabled className="flex h-[20px] w-[80px] shrink-0 items-center justify-center rounded-[3px] border border-[#efede3] bg-[#fffef8] text-[#f3e4d3]">
          Обновить
        </button>
        <button type="button" className={`-mr-[37px] ${buttonClass}`}>Выполнить</button>
      </div>
    </div>
  </section>
);

const App: React.FC = () => (
  <div className="relative flex min-h-screen w-full flex-col overflow-hidden bg-[#fafaf2] font-['Liberation_Sans',sans-serif] text-[11px] leading-[14px] text-[#b0ab95]">
    <header className="flex h-[22px] items-center border-t border-[#3c4654] bg-linear-to-b from-[#98b3d3] to-[#b9d1ea]">
      <span className="mr-[8px] h-[12px] w-[2px] bg-[#e9b73a]" />
      <p className="whitespace-nowrap font-['Open_Sans',sans-serif] text-[11px] text-black">
        Конфигуратор - Управление торговлей для Украины, редакция 2.3 (Не отвечает)
      </p>
    </header>
    <nav className="flex h-[24px] items-center pl-px">
      {menu.map(([before, key, after], i) => (
        <button key={i} type="button" className={`shrink-0 whitespace-nowrap text-left ${MENU_WIDTHS[i]}`}>
          {before}<u>{key}</u>{after}
        </button>
      ))}
    </nav>
    <MainToolbar />
    <ConfigToolbar />
    <main className="flex flex-1 items-stretch">
      <ConfigPanel />
      <CompareWindow />
    </main>
    <div className="mt-px flex h-[23px] items-start border-b border-[#efeee4]">
      <button type="button" className="flex h-[20px] w-[157px] items-center whitespace-nowrap border border-l-0 border-[#e0dccb] bg-[#dfeaf5] text-[#aaa]">
        <span className="mr-[3px] h-[12px] w-px bg-[#b9c3cc]" />
        ...\КонфигурацияДляОбъед...
      </button>
    </div>
    <footer className="flex h-[18px] items-center whitespace-nowrap border-b border-[#efeee4]">
      <span className="-ml-[8px] w-[130px] shrink-0">Создание списка ссылок</span>
      <div role="progressbar" aria-label="Создание списка ссылок" aria-valuenow={70} className="relative mr-[4px] h-[16px] w-[100px] shrink-0 rounded-[3px] border border-[#dedccb] bg-[#fffef8] p-px">
        <div className="h-full bg-linear-to-b from-[#fbe6cc] to-[#f5d9b3]" style={{ width: '70%' }} />
        <span className="absolute inset-0 flex items-center justify-center text-[#c9b89a]">70%</span>
      </div>
      УправлениеТорговлей.БыстроеОсвоение
    </footer>
    <div className="mt-px h-[2px] border-t border-[#3c4a58] bg-[#cdd9e8]" />
    <svg width="160" height="370" viewBox="0 0 160 370" className="pointer-events-none absolute left-[424px] top-[20px]" aria-hidden="true">
      <path d="M149 360L20 42" stroke="#f00" strokeWidth="10" strokeLinecap="round" />
      <path d="M4 2l29 36-25 10z" fill="#f00" />
    </svg>
  </div>
);

export default App;
